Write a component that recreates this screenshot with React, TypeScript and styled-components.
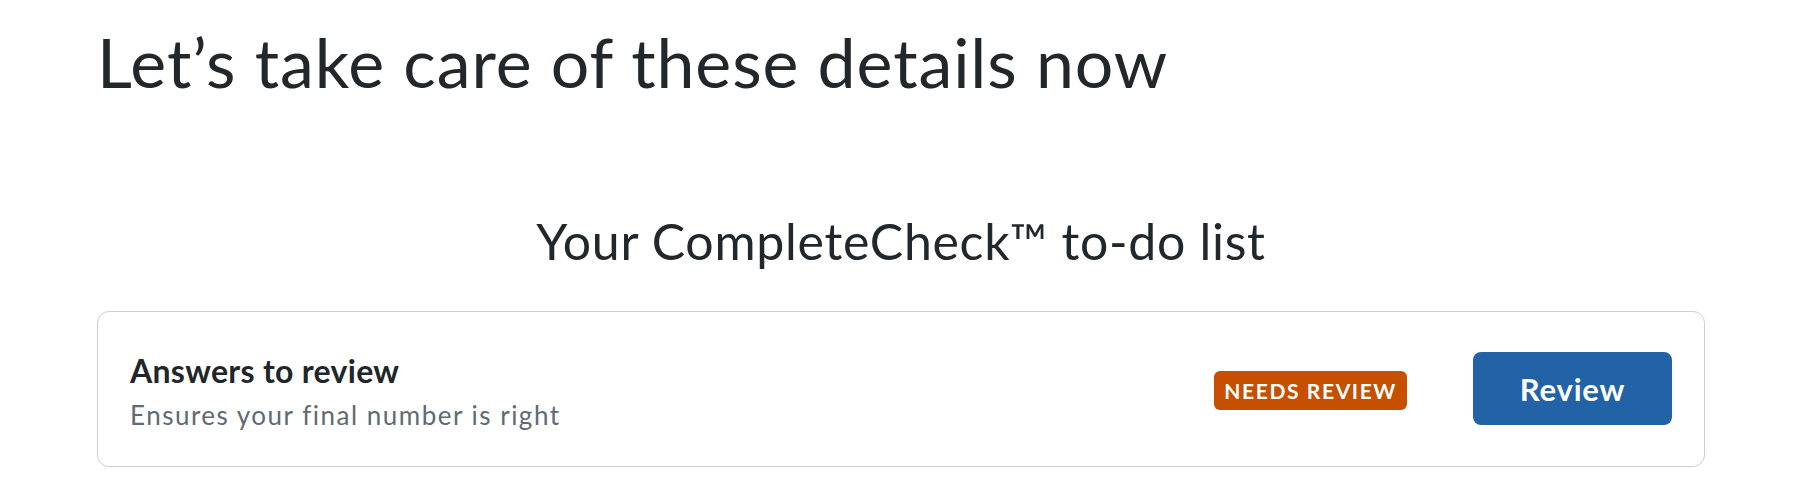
import React from 'react'
import styled, { createGlobalStyle } from 'styled-components';

const GlobalStyle = createGlobalStyle`
    html, body {
        margin: 0;
        padding: 0;
        background: #ffffff;
    }
    body {
        font-family: Lato, "Open Sans", sans-serif;
        color: #212529;
    }
`;

const Page = styled.main`
    width: 1608px;
    margin-left: 97px;
    padding-top: 21px;
`;

const Heading = styled.h1`
    margin: 0;
    font-family: Lato, sans-serif;
    font-weight: 400;
    font-size: 68px;
    line-height: 1.2;
    color: #22272b;
    letter-spacing: 0.9px;
`;

const ListTitle = styled.h2`
    margin: 108px 0 0;
    text-align: center;
    font-family: Lato, sans-serif;
    font-weight: 400;
    font-size: 50px;
    line-height: 1.2;
    color: #22272b;
    letter-spacing: 0.7px;
`;

const Card = styled.section`
    box-sizing: border-box;
    margin-top: 40px;
    height: 156px;
    padding: 0 32px;
    display: flex;
    align-items: center;
    justify-content: space-between;
    border: 1.5px solid #c9cfd4;
    border-radius: 12px;
`;

const ItemText = styled.div`
    display: flex;
    flex-direction: column;
    gap: 9px;
    margin-top: 5px;
`;

const ItemTitle = styled.div`
    font-weight: 700;
    font-size: 32px;
    line-height: 38px;
    color: #21262a;
    letter-spacing: 0.3px;
`;

const ItemNote = styled.div`
    font-weight: 400;
    font-size: 26px;
    line-height: 32px;
    color: #5f6a72;
    letter-spacing: 1.5px;
`;

const Actions = styled.div`
    display: flex;
    align-items: center;
    gap: 66px;
`;

const Badge = styled.span`
    display: inline-block;
    height: 39px;
    line-height: 39px;
    padding: 0 10px;
    margin-top: 3px;
    border-radius: 6px;
    background: #c64f00;
    color: #ffffff;
    font-weight: 700;
    font-size: 21px;
    letter-spacing: 1.6px;
    text-transform: uppercase;
`;

const ReviewButton = styled.button`
    width: 199px;
    height: 73px;
    border: 0;
    border-radius: 8px;
    background: #2262a6;
    color: #ffffff;
    font-family: Lato, sans-serif;
    font-weight: 700;
    font-size: 31px;
    letter-spacing: 0.8px;
    cursor: pointer;
`;

export interface TodoItem {
    title: string;
    note: string;
    status: string;
    action: string;
}

const items: TodoItem[] = [
    { title: 'Answers to review', note: 'Ensures your final number is right', status: 'Needs review', action: 'Review' },
];

const App: React.FC = () => {
    return (
        <>
            <GlobalStyle />
            <Page>
                <Heading>Let’s take care of these details now</Heading>
                <ListTitle>Your CompleteCheck™ to-do list</ListTitle>
                {items.map((item) => (
                    <Card key={item.title}>
                        <ItemText>
                            <ItemTitle>{item.title}</ItemTitle>
                            <ItemNote>{item.note}</ItemNote>
                        </ItemText>
                        <Actions>
                            <Badge>{item.status}</Badge>
                            <ReviewButton>{item.action}</ReviewButton>
                        </Actions>
                    </Card>
                ))}
            </Page>
        </>
    )
}

export default App
